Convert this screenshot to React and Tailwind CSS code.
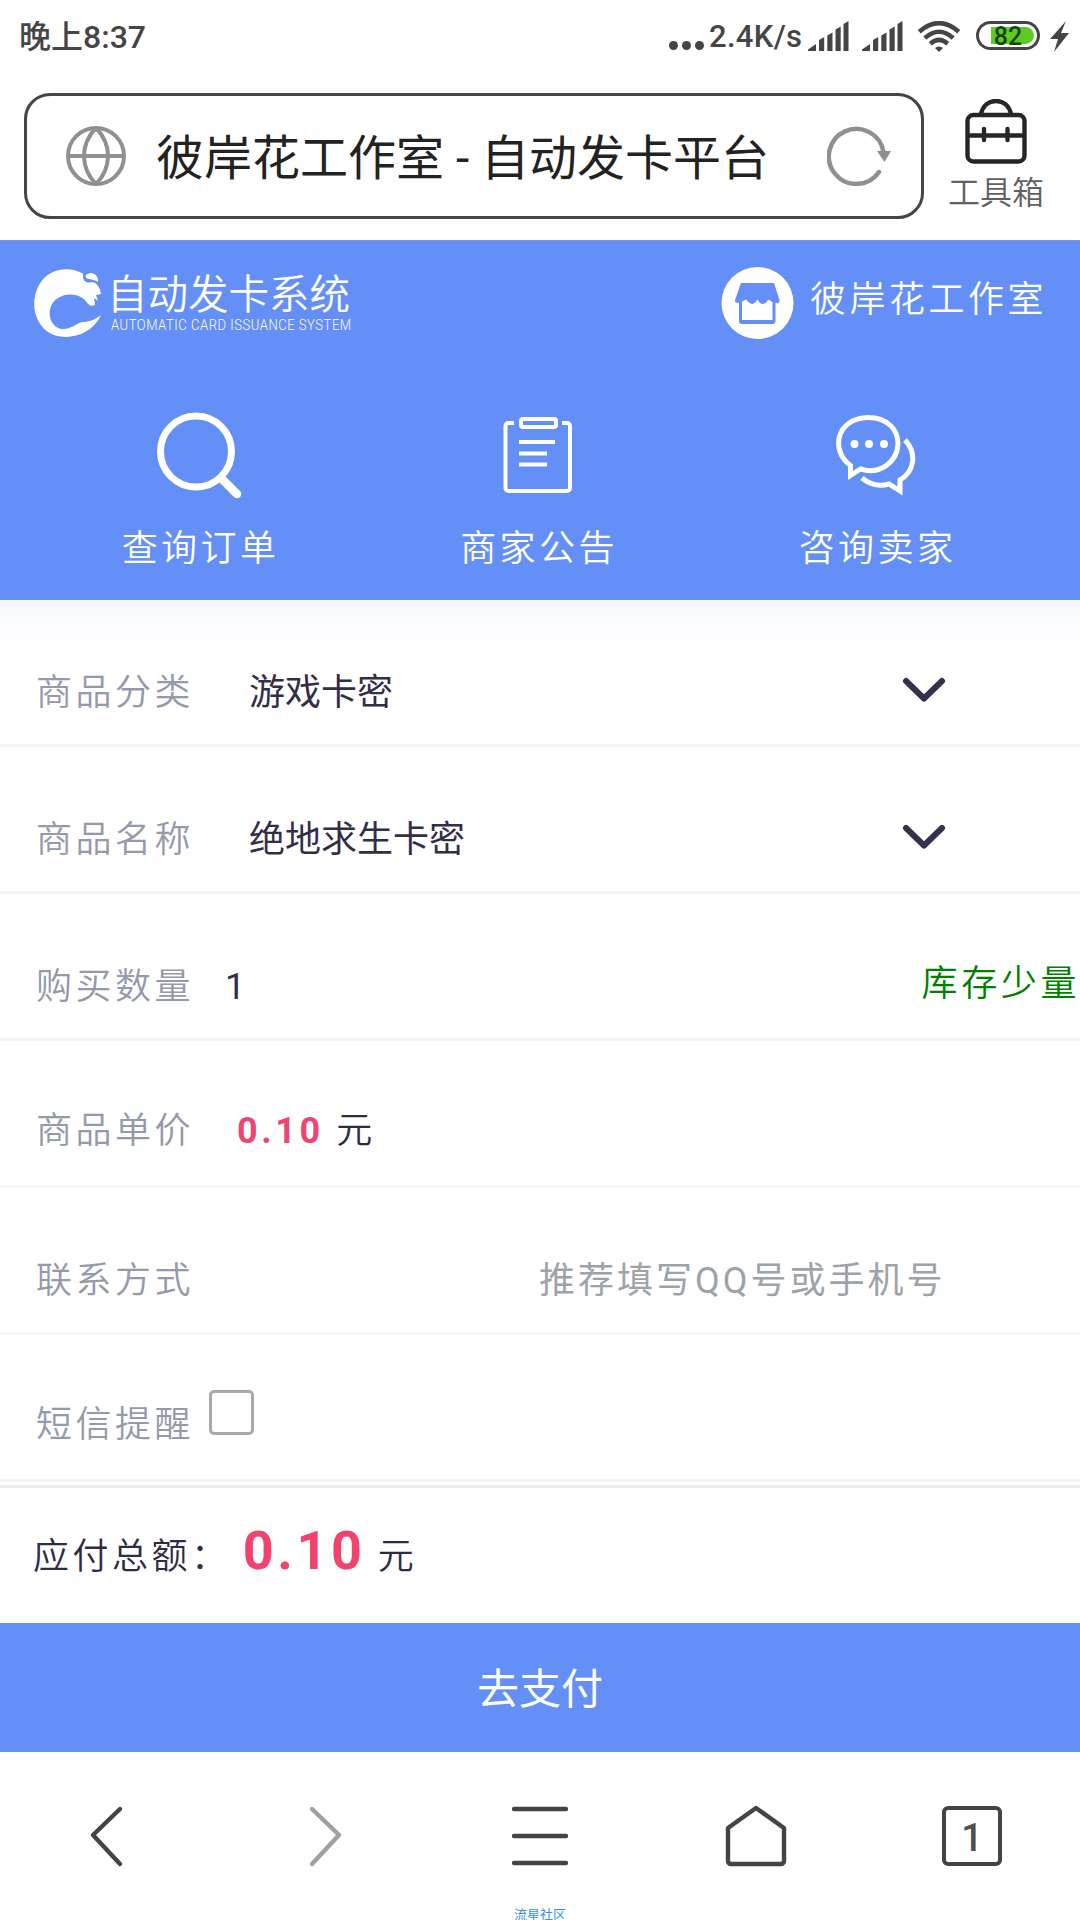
function Signal() {
  return (
    <svg width="41" height="30" viewBox="0 0 41 30" fill="#454545">
      <path d="M0 28.500 8 23v7H0zM11 19l5.200-3v14H11zM19.300 14.500l5.200-3v18.500h-5.200zM27.500 8.500l5.200-3v24.500h-5.200zM35.500 3 40.500 0v30h-5z" />
    </svg>
  );
}

function Wifi() {
  return (
    <svg width="42" height="31" viewBox="0 0 42 31" fill="none" stroke="#454545" strokeWidth="4.500">
      <path d="M1.200 10.700Q21-6.500 40.800 10.700M6.800 17Q21 4.500 35.200 17M12.300 22.800Q21 15 29.700 22.800" />
      <path d="m17 27 4 4 4-4a6 6 0 0 0-8 0z" fill="#454545" stroke="none" />
    </svg>
  );
}

function StatusBar() {
  return (
    <div className="flex h-[74px] items-start pl-[19px] pr-[11px] text-[#454545]">
      <div className="mt-[17px] text-[32px] leading-[40px] font-medium">晚上8:37</div>
      <div className="ml-auto flex">
        <div className="mt-[41px] flex gap-[4px]">
          <i className="size-[9px] rounded-full bg-[#454545]" />
          <i className="size-[9px] rounded-full bg-[#454545]" />
          <i className="size-[9px] rounded-full bg-[#454545]" />
        </div>
        <div className="mt-[17px] ml-[5px] w-[92px] text-[31px] leading-[40px] font-medium tracking-[0.3px] whitespace-nowrap">2.4K/s</div>
        <div className="mt-[21px] ml-[7px] flex">
          <Signal />
          <div className="ml-[13px]"><Signal /></div>
          <div className="ml-[15px]"><Wifi /></div>
        </div>
        <div className="mt-[21px] ml-[16px] flex h-[29px] w-[64px] rounded-full border-[3px] border-[#454545] p-[3px]">
          <div className="ml-[9px] flex w-[43px] items-center justify-center rounded-r-full bg-[#5ecb22] pt-[2px] pr-[9px] text-[25px] leading-none font-medium text-[#17440a]">82</div>
        </div>
        <svg className="mt-[21px] ml-[10px]" width="19" height="31" viewBox="0 0 19 31" fill="#454545">
          <path d="M16 0 0 18h8L4 31 19 12h-8z" />
        </svg>
      </div>
    </div>
  );
}

function AddressBar() {
  return (
    <div className="flex h-[166px] pt-[19px] pl-[24px]">
      <div className="flex h-[126px] w-[900px] items-center rounded-[26px] border-[3px] border-[#454545] pl-[39px]">
        <svg width="60" height="60" viewBox="0 0 60 60" fill="none" stroke="#909090" strokeWidth="4">
          <circle cx="30" cy="30" r="28" />
          <path d="M2 30h56M30 2C14 18 14 42 30 58C46 42 46 18 30 2" />
        </svg>
        <div className="mt-[6px] ml-[30px] text-[48px] leading-[60px] whitespace-nowrap text-[#222]">彼岸花工作室 - 自动发卡平台</div>
        <svg className="ml-auto mr-[30px]" width="64" height="60" viewBox="0 0 64 60" fill="none" stroke="#909090" strokeWidth="4.500" strokeLinecap="round">
          <path d="M52 46A27.500 27.500 0 1 1 56.500 26" />
          <path d="M50 25h14l-6.500 11z" fill="#909090" stroke="none" />
        </svg>
      </div>
      <div className="ml-[22px] flex w-[100px] flex-col items-center pt-[6px]">
        <svg width="62" height="65" viewBox="0 0 62 65" fill="none" stroke="#262626" strokeWidth="4.400" strokeLinecap="round">
          <rect x="2.500" y="16" width="57" height="46.500" rx="6" />
          <path d="M16 15C18 6 24 2 31 2s13 4 15 13M3 36.500h56M19 30v11M42.500 30v11" />
        </svg>
        <div className="mt-[9px] text-[32px] leading-[40px] font-[350] text-[#606060]">工具箱</div>
      </div>
    </div>
  );
}

function Logo() {
  return (
    <div className="flex pl-[34px] pt-[27px]">
      <svg width="70" height="70" viewBox="0 0 70 70" fill="#fff">
        <path d="M49 5.500C34-3 13 1 5 17C-4 34 0 54 14 64C29 74 57 69 67 47C60 52 55 54 49 54C41 55 38 62 27 61C16 58 13 45 18 36C26 24 46 23 54 36L57 38L61 37L60 30L64 33L62 27L67 26C66 19 63 15 58 14C52 16 48 12 49 5.500z" />
        <path d="M54 6C58 3 65 7 64 14C60 11 56 12 52 10C51 8 52 6 54 6z" />
      </svg>
      <div className="ml-[3px] mt-[6px] w-[245px] text-white">
        <div className="text-[40.500px] leading-[42px] font-[350] whitespace-nowrap">自动发卡系统</div>
        <div className="mt-[2px] ml-[4px] origin-left scale-x-[0.87] text-[15px] leading-[14px] font-light tracking-[0.6px] whitespace-nowrap">AUTOMATIC CARD ISSUANCE SYSTEM</div>
      </div>
    </div>
  );
}

function SearchIcon() {
  return (
    <svg className="relative -top-px left-px" width="86" height="88" viewBox="0 0 86 88" fill="none" stroke="#fff">
      <circle cx="39" cy="40.500" r="35.500" strokeWidth="7" />
      <path d="M65 68 80 83" strokeWidth="8.500" strokeLinecap="round" />
    </svg>
  );
}

function NoticeIcon() {
  return (
    <svg width="70" height="78" viewBox="0 0 70 78" fill="none" stroke="#fff" strokeWidth="4">
      <path d="M11 6H5.500A3 3 0 0 0 2.500 9V71A3 3 0 0 0 5.500 74H64A3 3 0 0 0 67 71V9A3 3 0 0 0 64 6H59" />
      <rect x="18" y="2" width="35" height="8" rx="2" />
      <path d="M16 25h36M16 36.500h28M16 47.500h28" />
    </svg>
  );
}

function ChatIcon() {
  return (
    <svg width="80" height="82" viewBox="0 0 80 82" fill="none" stroke="#fff" strokeWidth="5">
      <path d="M14.500 50.500C-6 36 0 3 32 2.500C53 2.500 62 16 62 29C61 48 43 60 24.500 54L14.500 60.500z" />
      <path d="M69 25C81 38 79 56 64 65V76L53 69C43 72 33 69 26 63" />
      <g fill="#fff" stroke="none"><circle cx="18.500" cy="29" r="4" /><circle cx="33" cy="29" r="4" /><circle cx="48" cy="29" r="4" /></g>
    </svg>
  );
}

const actions = [
  { label: '查询订单', icon: <SearchIcon /> },
  { label: '商家公告', icon: <NoticeIcon /> },
  { label: '咨询卖家', icon: <ChatIcon /> },
];

function Header() {
  return (
    <header className="h-[360px] border-t border-[#7f93cf] bg-[#648ff7] text-white">
      <div className="flex h-[160px] justify-between">
        <Logo />
        <div className="flex pt-[26px] pr-[33px]">
          <svg width="73" height="73" viewBox="0 0 73 73">
            <circle cx="36.500" cy="36" r="36" fill="#fff" />
            <path d="M20 16h33l5.500 17c.5 3-2 4-4 2.500V54a3 3 0 0 1-3 3H21a3 3 0 0 1-3-3V35.500c-2 1-4.500 0-4-2.500z" fill="#648ff7" />
            <path d="M21 53V34.500l4-2Q29 37 31.500 37Q35 36 36.500 32.500Q39 37 42 37Q46 36 47 32.500L51.500 35V53z" fill="#fff" />
          </svg>
          <div className="mt-[7px] ml-[16px] text-[36px] leading-[52px] font-[350] tracking-[3.500px]">彼岸花工作室</div>
        </div>
      </div>
      <div className="flex justify-between pr-[123px] pl-[121px]">
        {actions.map((a) => (
          <div key={a.label} className="flex w-[159px] flex-col items-center">
            <div className="flex h-[110px] items-center justify-center pr-[3px]">{a.icon}</div>
            <div className="mt-[12px] text-[36px] leading-[52px] font-[350] tracking-[3.400px] whitespace-nowrap">{a.label}</div>
          </div>
        ))}
      </div>
    </header>
  );
}

function Row({ label, low, children }) {
  return (
    <div className={`flex h-[147px] border-b-[3px] border-[#f4f4f5] pl-[36px] ${low ? 'pt-[64px]' : 'pt-[67px]'}`}>
      <div className="w-[172px] shrink-0 text-[36px] leading-[52px] font-[350] tracking-[3.500px] text-[#9499ab]">{label}</div>
      {children}
    </div>
  );
}

function Select({ value }) {
  return (
    <div className="flex grow pl-[41px] text-[36px] leading-[52px] text-[#322e48]">
      <span>{value}</span>
      <svg className="mt-[10px] mr-[134px] ml-auto" width="44" height="26" viewBox="0 0 44 26" fill="none" stroke="#34304d" strokeWidth="6" strokeLinecap="round" strokeLinejoin="round">
        <path d="M4 4 22 21.500 40 4" />
      </svg>
    </div>
  );
}

function Form() {
  return (
    <main className="bg-linear-to-b from-[#f5f8fe] to-white to-[45px]">
      <Row label="商品分类"><Select value="游戏卡密" /></Row>
      <Row label="商品名称"><Select value="绝地求生卡密" /></Row>
      <Row label="购买数量">
        <span className="ml-[17px] text-[36px] leading-[52px] text-[#322e48]">1</span>
        <span className="-mt-[3px] ml-auto text-[36px] leading-[52px] font-[350] tracking-[3.600px] text-[#008000]">库存少量</span>
      </Row>
      <Row label="商品单价" low>
        <span className="ml-[29px] text-[36px] leading-[52px] font-[350] tracking-[3.600px] text-[#2f2b45]"><b className="font-bold text-[#ee4673]">0.10</b> 元</span>
      </Row>
      <Row label="联系方式">
        <span className="ml-[331px] text-[36px] leading-[52px] tracking-[3px] text-[#9ca3a9]">推荐填写QQ号或手机号</span>
      </Row>
      <Row label="短信提醒" low>
        <span className="-mt-[9px] ml-px size-[45px] rounded-[5px] border-[3px] border-[#a9a9a9]" />
      </Row>
    </main>
  );
}

function BottomNav() {
  return (
    <nav className="flex h-[168px] flex-col">
      <div className="grid h-[168px] shrink-0 grid-cols-5 justify-items-center pt-[52px]">
        <svg width="64" height="64" viewBox="0 0 64 64" fill="none" stroke="#444" strokeWidth="4.400" strokeLinecap="round" strokeLinejoin="round"><path d="M44 5 17 31 44 60" /></svg>
        <svg width="64" height="64" viewBox="0 0 64 64" fill="none" stroke="#a0a0a0" strokeWidth="4.400" strokeLinecap="round" strokeLinejoin="round"><path d="M20 5 47 31 20 60" /></svg>
        <svg width="64" height="64" viewBox="0 0 64 64" fill="none" stroke="#444" strokeWidth="4.400" strokeLinecap="round"><path d="M6 5h52M6 32h52M6 59h52" /></svg>
        <svg width="64" height="64" viewBox="0 0 64 64" fill="none" stroke="#444" strokeWidth="4.400" strokeLinejoin="round"><path d="M32 4 4 24V57a3 3 0 0 0 3 3H57a3 3 0 0 0 3-3V24z" /></svg>
        <div className="mt-[2px] flex h-[60px] w-[60px] items-center justify-center rounded-[6px] border-4 border-[#444] pt-[4px] text-[38px] leading-none font-medium text-[#505050]">1</div>
      </div>
      <div className="-mt-[12px] shrink-0 text-center text-[13px] leading-[14px] text-[#3b8fe8]">流星社区</div>
    </nav>
  );
}

export default function App() {
  return (
    <div className={`h-[1920px] w-[1080px] overflow-hidden bg-white font-["Roboto","Noto_Sans_CJK_SC",sans-serif]`}>
      <StatusBar />
      <AddressBar />
      <Header />
      <Form />
      <section className="mt-[3px] h-[138px] border-t-[3px] border-[#e8edf0] pt-[33px] pl-[33px] text-[36px] leading-[60px] font-[350] tracking-[3.500px] text-[#2f2b45]">
        应付总额： <b className="text-[54px] font-bold text-[#f3426e]">0.10</b> 元
      </section>
      <button className="flex h-[129px] w-full items-center justify-center bg-[#648ff7] pt-[5px] text-[42px] leading-[60px] text-white">去支付</button>
      <BottomNav />
    </div>
  );
}
